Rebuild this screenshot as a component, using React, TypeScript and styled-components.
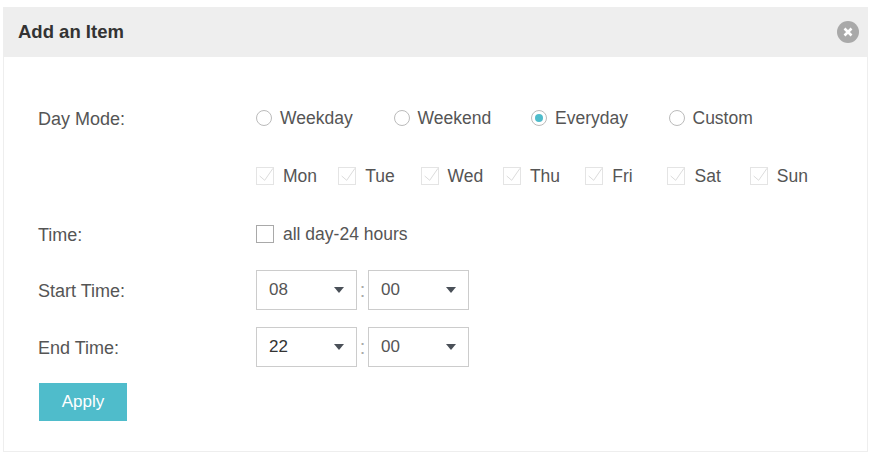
import React from "react";
import styled, { createGlobalStyle } from "styled-components";

const GlobalStyle = createGlobalStyle`
  html, body {
    margin: 0;
    padding: 0;
    background: #fff;
  }
  body {
    font-family: "Liberation Sans", Arial, sans-serif;
    color: #555;
  }
`;

const Page = styled.div`
  box-sizing: border-box;
  width: 871px;
  height: 453px;
  padding: 7px 3px 1px 3px;
`;

const Panel = styled.div`
  box-sizing: border-box;
  height: 100%;
  border: 1px solid #eee;
  border-top: none;
  display: flex;
  flex-direction: column;
`;

const Header = styled.div`
  height: 50px;
  flex: none;
  background: #eee;
  display: flex;
  align-items: center;
  justify-content: space-between;
  padding: 0 8px 0 14px;
`;

const Title = styled.span`
  font-size: 18.5px;
  font-weight: 700;
  color: #333;
`;

const Close = styled.button`
  width: 22px;
  height: 22px;
  padding: 0;
  border: none;
  border-radius: 50%;
  background: #a9a9a9;
  display: flex;
  align-items: center;
  justify-content: center;
`;

const Form = styled.form`
  display: flex;
  flex-direction: column;
  padding: 32px 0 0 34px;
`;

const Row = styled.div<{ $height: number }>`
  display: flex;
  align-items: center;
  height: ${p => p.$height}px;
`;

const Label = styled.label`
  width: 218px;
  flex: none;
  padding-top: 3px;
  font-size: 18px;
  color: #555;
`;

const Option = styled.label<{ $width?: number }>`
  display: flex;
  align-items: center;
  width: ${p => (p.$width ? `${p.$width}px` : "auto")};
  flex: none;
  font-size: 17.5px;
  color: #555;
`;

const RadioMark = styled.span<{ $on?: boolean }>`
  box-sizing: border-box;
  width: 16px;
  height: 16px;
  border: 1px solid #bbb;
  border-radius: 50%;
  margin-right: 8px;
  display: flex;
  align-items: center;
  justify-content: center;

  &::after {
    content: "";
    display: ${p => (p.$on ? "block" : "none")};
    width: 8px;
    height: 8px;
    border-radius: 50%;
    background: #4fbccb;
  }
`;

const CheckMark = styled.span<{ $disabled?: boolean }>`
  box-sizing: border-box;
  width: 18px;
  height: 18px;
  margin-right: 9px;
  border: 1px solid ${p => (p.$disabled ? "#e4e4e4" : "#a9a9a9")};
  display: flex;
  align-items: center;
  justify-content: center;

  svg {
    flex: none;
    margin: -1px;
  }
`;

const SelectBox = styled.div<{ $strong?: boolean }>`
  box-sizing: border-box;
  width: 101px;
  height: 40px;
  border: 1px solid #ccc;
  display: flex;
  align-items: center;
  justify-content: space-between;
  padding: 0 12px;
  font-size: 17px;
  color: ${p => (p.$strong ? "#333" : "#555")};
`;

const Arrow = styled.span`
  width: 0;
  height: 0;
  border-left: 5px solid transparent;
  border-right: 5px solid transparent;
  border-top: 6px solid #4a5058;
`;

const Colon = styled.span`
  width: 11px;
  text-align: center;
  font-size: 20px;
  color: #aaa;
`;

const ApplyButton = styled.button`
  width: 88px;
  height: 38px;
  margin: 6px 0 0 1px;
  padding: 0;
  border: none;
  background: #4fbccb;
  color: #fff;
  font-family: inherit;
  font-size: 17px;
  font-weight: 400;
`;

const days = ["Mon", "Tue", "Wed", "Thu", "Fri", "Sat", "Sun"];
const modes = ["Weekday", "Weekend", "Everyday", "Custom"];

const TimeSelect: React.FC<{ value: string; strong?: boolean }> = ({ value, strong }) => (
  <SelectBox $strong={strong}>
    {value}
    <Arrow />
  </SelectBox>
);

export default function App() {
  return (
    <Page>
      <GlobalStyle />
      <Panel>
        <Header>
          <Title>Add an Item</Title>
          <Close type="button" aria-label="Close">
            <svg width="12" height="12" viewBox="0 0 12 12">
              <path d="M2.5 2.5l7 7M9.5 2.5l-7 7" stroke="#fff" strokeWidth="2.6" />
            </svg>
          </Close>
        </Header>
        <Form>
          <Row $height={58}>
            <Label>Day Mode:</Label>
            {modes.map(mode => (
              <Option key={mode} $width={137.5}>
                <RadioMark $on={mode === "Everyday"} />
                {mode}
              </Option>
            ))}
          </Row>
          <Row $height={58}>
            <Label />
            {days.map(day => (
              <Option key={day} $width={82.3}>
                <CheckMark $disabled>
                  <svg width="18" height="18" viewBox="0 0 18 18">
                    <path d="M3.7 9l5 4.3L17 1.3" fill="none" stroke="#dcdcdc" strokeWidth="1" />
                  </svg>
                </CheckMark>
                {day}
              </Option>
            ))}
          </Row>
          <Row $height={58}>
            <Label>Time:</Label>
            <Option>
              <CheckMark />
              all day-24 hours
            </Option>
          </Row>
          <Row $height={54}>
            <Label>Start Time:</Label>
            <TimeSelect value="08" />
            <Colon>:</Colon>
            <TimeSelect value="00" />
          </Row>
          <Row $height={60}>
            <Label>End Time:</Label>
            <TimeSelect value="22" strong />
            <Colon>:</Colon>
            <TimeSelect value="00" />
          </Row>
          <ApplyButton type="button">Apply</ApplyButton>
        </Form>
      </Panel>
    </Page>
  );
}
